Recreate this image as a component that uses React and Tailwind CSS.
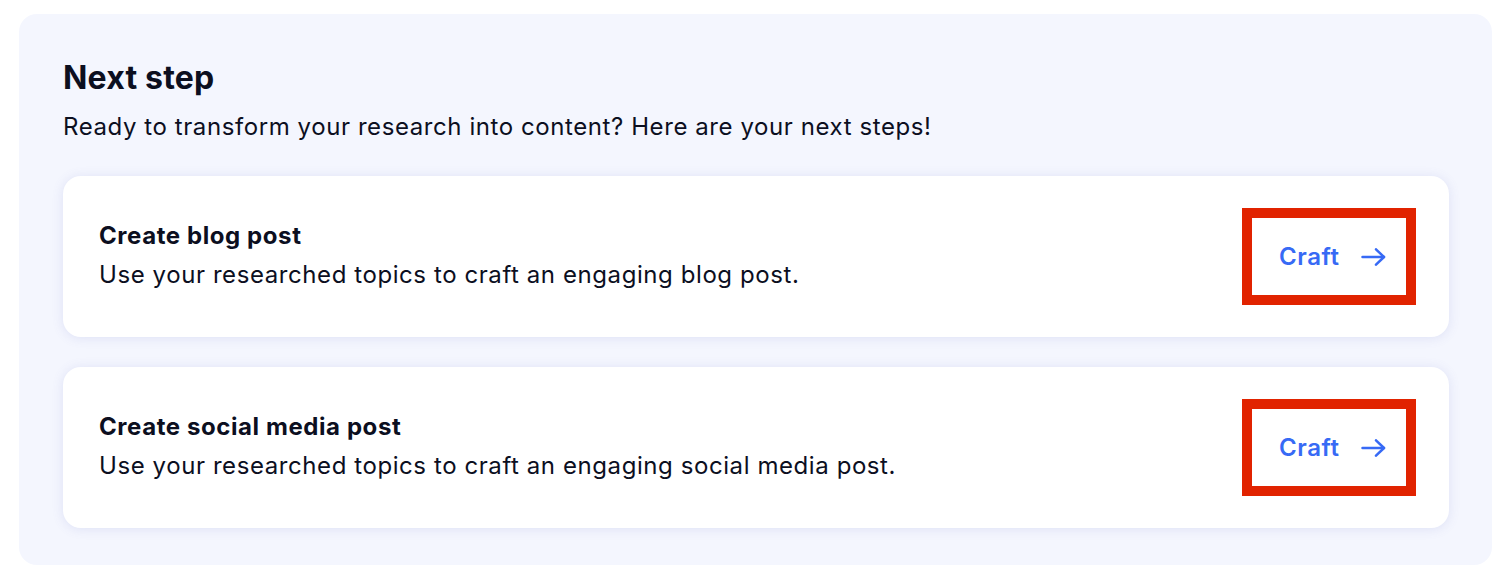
export default function App() {
  const items = [
    { title: "Create blog post", desc: "Use your researched topics to craft an engaging blog post." },
    { title: "Create social media post", desc: "Use your researched topics to craft an engaging social media post." },
  ];
  return (
    <div className="min-h-[576px] bg-white pt-[14px] pl-[19px]" style={{ fontFamily: "Inter, 'Noto Sans', sans-serif" }}>
      <div className="w-[1473px] rounded-[18px] bg-[#f4f6fe] pl-[44px] pr-[43px] pt-[46px] pb-[37px] text-[#0c0f1f] tracking-[0.58px]">
        <h2 className="text-[32px] leading-[36px] font-bold tracking-[0.2px]">Next step</h2>
        <p className="mt-[13px] text-[24px] leading-[36px]">Ready to transform your research into content? Here are your next steps!</p>
        <div className="mt-[31px] flex flex-col gap-[30px]">
          {items.map((it) => (
            <div key={it.title} className="flex h-[161px] items-center justify-between rounded-[18px] bg-white pl-[36px] pr-[33px] shadow-[0_1px_12px_rgba(90,100,190,0.14)]">
              <div className="pb-[2px]">
                <div className="text-[24px] leading-[36px] font-bold">{it.title}</div>
                <div className="mt-[3px] text-[24px] leading-[36px]">{it.desc}</div>
              </div>
              <button className="flex h-[97px] w-[174px] items-center border-[10px] border-[#e12300] bg-white pl-[27px] text-[#376af5] tracking-[0.6px]">
                <span className="text-[24px] leading-[36px] font-semibold">Craft</span>
                <svg className="ml-[21px]" width="25" height="18" viewBox="0 0 25 18" fill="none" stroke="currentColor" strokeWidth="2.5" strokeLinecap="round" strokeLinejoin="round">
                  <path d="M1.5 9H23" />
                  <path d="M15 1.3L23 9L15 16.7" />
                </svg>
              </button>
            </div>
          ))}
        </div>
      </div>
    </div>
  );
}
